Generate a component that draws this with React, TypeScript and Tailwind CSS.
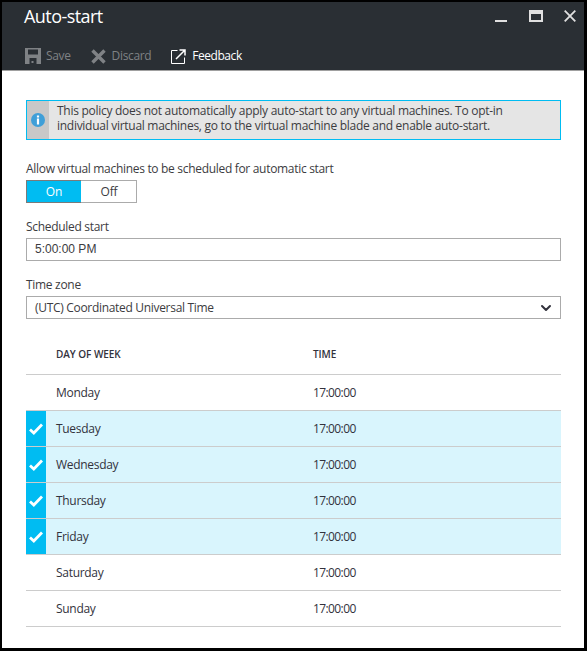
import { ChevronDown } from 'lucide-react';

const font = { fontFamily: '"Open Sans", "Noto Sans", sans-serif' };

const rows = [
  { day: 'Monday', on: false },
  { day: 'Tuesday', on: true },
  { day: 'Wednesday', on: true },
  { day: 'Thursday', on: true },
  { day: 'Friday', on: true },
  { day: 'Saturday', on: false },
  { day: 'Sunday', on: false },
];

function SaveIcon() {
  return (
    <svg width="16" height="16" viewBox="0 0 16 16" className="text-[#7f8285]">
      <path fill="currentColor" fillRule="evenodd" d="M0 0h16v16H0zM3 1.500v5h10v-5zM4.500 10v6h7v-6zM6.500 13h2v2h-2z" />
    </svg>
  );
}

function CrossIcon() {
  return (
    <svg width="15" height="15" viewBox="0 0 15 15" className="text-[#7f8285]">
      <path fill="none" stroke="currentColor" strokeWidth="3.400" d="M1.500 1.500l12 12M13.500 1.500l-12 12" />
    </svg>
  );
}

function ExternalIcon() {
  return (
    <svg width="15" height="15" viewBox="0 0 15 15" className="text-white">
      <path fill="none" stroke="currentColor" d="M6.500 1.500H.5v13h13V8.500" />
      <path fill="none" stroke="currentColor" strokeWidth="1.500" d="M5 10l8.500-8.500M8.500 1h5.500v5.500" />
    </svg>
  );
}

export default function App() {
  return (
    <div className="w-[587px] h-[652px] bg-white" style={font}>
      <div className="h-[651px] bg-black pl-[2px] pr-[3px] pt-[2px] pb-[3px]">
        <div className="h-full bg-white flex flex-col">
          {/* Шапка */}
          <div className="h-[69px] bg-[#2a2f34] border-b border-[#a0a0a0] shrink-0">
            <div className="flex items-start justify-between pl-[22px] pr-[8px] pt-[1px] h-[38px]">
              <span className="text-[18px] leading-[27px] text-white tracking-[-0.55px]">Auto-start</span>
              <div className="flex items-start pt-[7px]">
                <div className="w-[12px] h-[2px] bg-[#e0e0e0] mt-[10px] mr-[22px]" />
                <div className="w-[14px] h-[12px] border-2 border-t-[4px] border-[#e0e0e0] mr-[21px]" />
                <svg width="12" height="12" viewBox="0 0 12 12" className="text-[#e0e0e0]">
                  <path fill="none" stroke="currentColor" strokeWidth="1.800" d="M.7.700l10.600 10.600M11.300.700L.7 11.300" />
                </svg>
              </div>
            </div>
            <div className="flex items-center pl-[23px] h-[22px] mt-[5px] text-[12px] tracking-[-0.35px]">
              <SaveIcon />
              <span className="ml-[5px] text-[#7f8285]">Save</span>
              <span className="ml-[20px]"><CrossIcon /></span>
              <span className="ml-[6px] text-[#7f8285]">Discard</span>
              <span className="ml-[20px]"><ExternalIcon /></span>
              <span className="ml-[6px] text-white tracking-[-0.45px]">Feedback</span>
            </div>
          </div>

          <div className="flex-1 pl-[24px] pr-[23px] pt-[29px]">
            {/* Инфо */}
            <div className="h-[40px] flex border border-[#00bcf2] bg-[#e5e5e5]">
              <div className="w-[22px] bg-[#c8c8c8] flex items-center justify-center">
                <svg width="14" height="14" viewBox="0 0 14 14">
                  <circle cx="7" cy="7" r="7" fill="#3f9fd8" />
                  <rect x="5.900" y="2.500" width="2.200" height="2" fill="#fff" />
                  <rect x="5.900" y="5.500" width="2.200" height="6" fill="#fff" />
                </svg>
              </div>
              <p className="pl-[8px] pt-[2px] text-[12px] leading-[15px] text-[#3c3c41] tracking-[-0.28px] whitespace-nowrap">
                This policy does not automatically apply auto-start to any virtual machines. To opt-in
                <br />
                individual virtual machines, go to the virtual machine blade and enable auto-start.
              </p>
            </div>

            <div className="mt-[20px] text-[12px] leading-[17px] text-[#3c3c41] tracking-[-0.31px]">
              Allow virtual machines to be scheduled for automatic start
            </div>
            <div className="mt-[3px] flex w-[111px] h-[23px] border border-[#ababab] text-[12px] tracking-[-0.2px]">
              <div className="w-[55px] -my-px -ml-px h-[23px] bg-[#00bcf2] border-y border-l border-[#7a7a7a] text-white flex items-center justify-center">On</div>
              <div className="flex-1 flex items-center justify-center pl-[1px] text-[#3c3c41]">Off</div>
            </div>

            <div className="mt-[15px] text-[12px] leading-[17px] text-[#3c3c41] tracking-[-0.3px]">Scheduled start</div>
            <div className="mt-[3px] h-[23px] border border-[#ababab] pl-[8px] text-[12px] leading-[21px] text-[#3c3c41]" style={{ fontFamily: '"Liberation Sans", sans-serif' }}>
              5:00:00 PM
            </div>

            <div className="mt-[15px] text-[12px] leading-[17px] text-[#3c3c41] tracking-[-0.3px]">Time zone</div>
            <div className="mt-[3px] h-[23px] border border-[#ababab] pl-[8px] pr-[6px] flex items-center justify-between text-[12px] text-[#3c3c41] tracking-[-0.31px]">
              <span>(UTC) Coordinated Universal Time</span>
              <ChevronDown size={16} strokeWidth={3} className="text-[#32323c]" />
            </div>

            {/* Таблица */}
            <div className="mt-[19px] text-[#32323c]">
              <div className="h-[37px] flex items-center border-b border-[#cccccc] pl-[30px] pb-[3px] text-[10px] font-semibold tracking-[-0.05px]">
                <span className="w-[257px]">DAY OF WEEK</span>
                <span>TIME</span>
              </div>
              {rows.map((row) => (
                <div
                  key={row.day}
                  className={`h-[36px] flex items-center border-b border-[#cccccc] text-[12px] tracking-[-0.3px] ${row.on ? 'bg-[#d9f5fd]' : ''}`}
                >
                  <div className={`w-[20px] h-full flex items-center justify-center ${row.on ? 'bg-[#00bcf2]' : ''}`}>
                    {row.on && (
                      <svg width="14" height="12" viewBox="0 0 14 12">
                        <path fill="none" stroke="#fff" strokeWidth="2.800" d="M1 6.500l3.800 3.500L13 1.500" />
                      </svg>
                    )}
                  </div>
                  <span className="ml-[10px] w-[257px]">{row.day}</span>
                  <span className="tracking-[-0.6px]">17:00:00</span>
                </div>
              ))}
            </div>
          </div>
        </div>
      </div>
    </div>
  );
}
